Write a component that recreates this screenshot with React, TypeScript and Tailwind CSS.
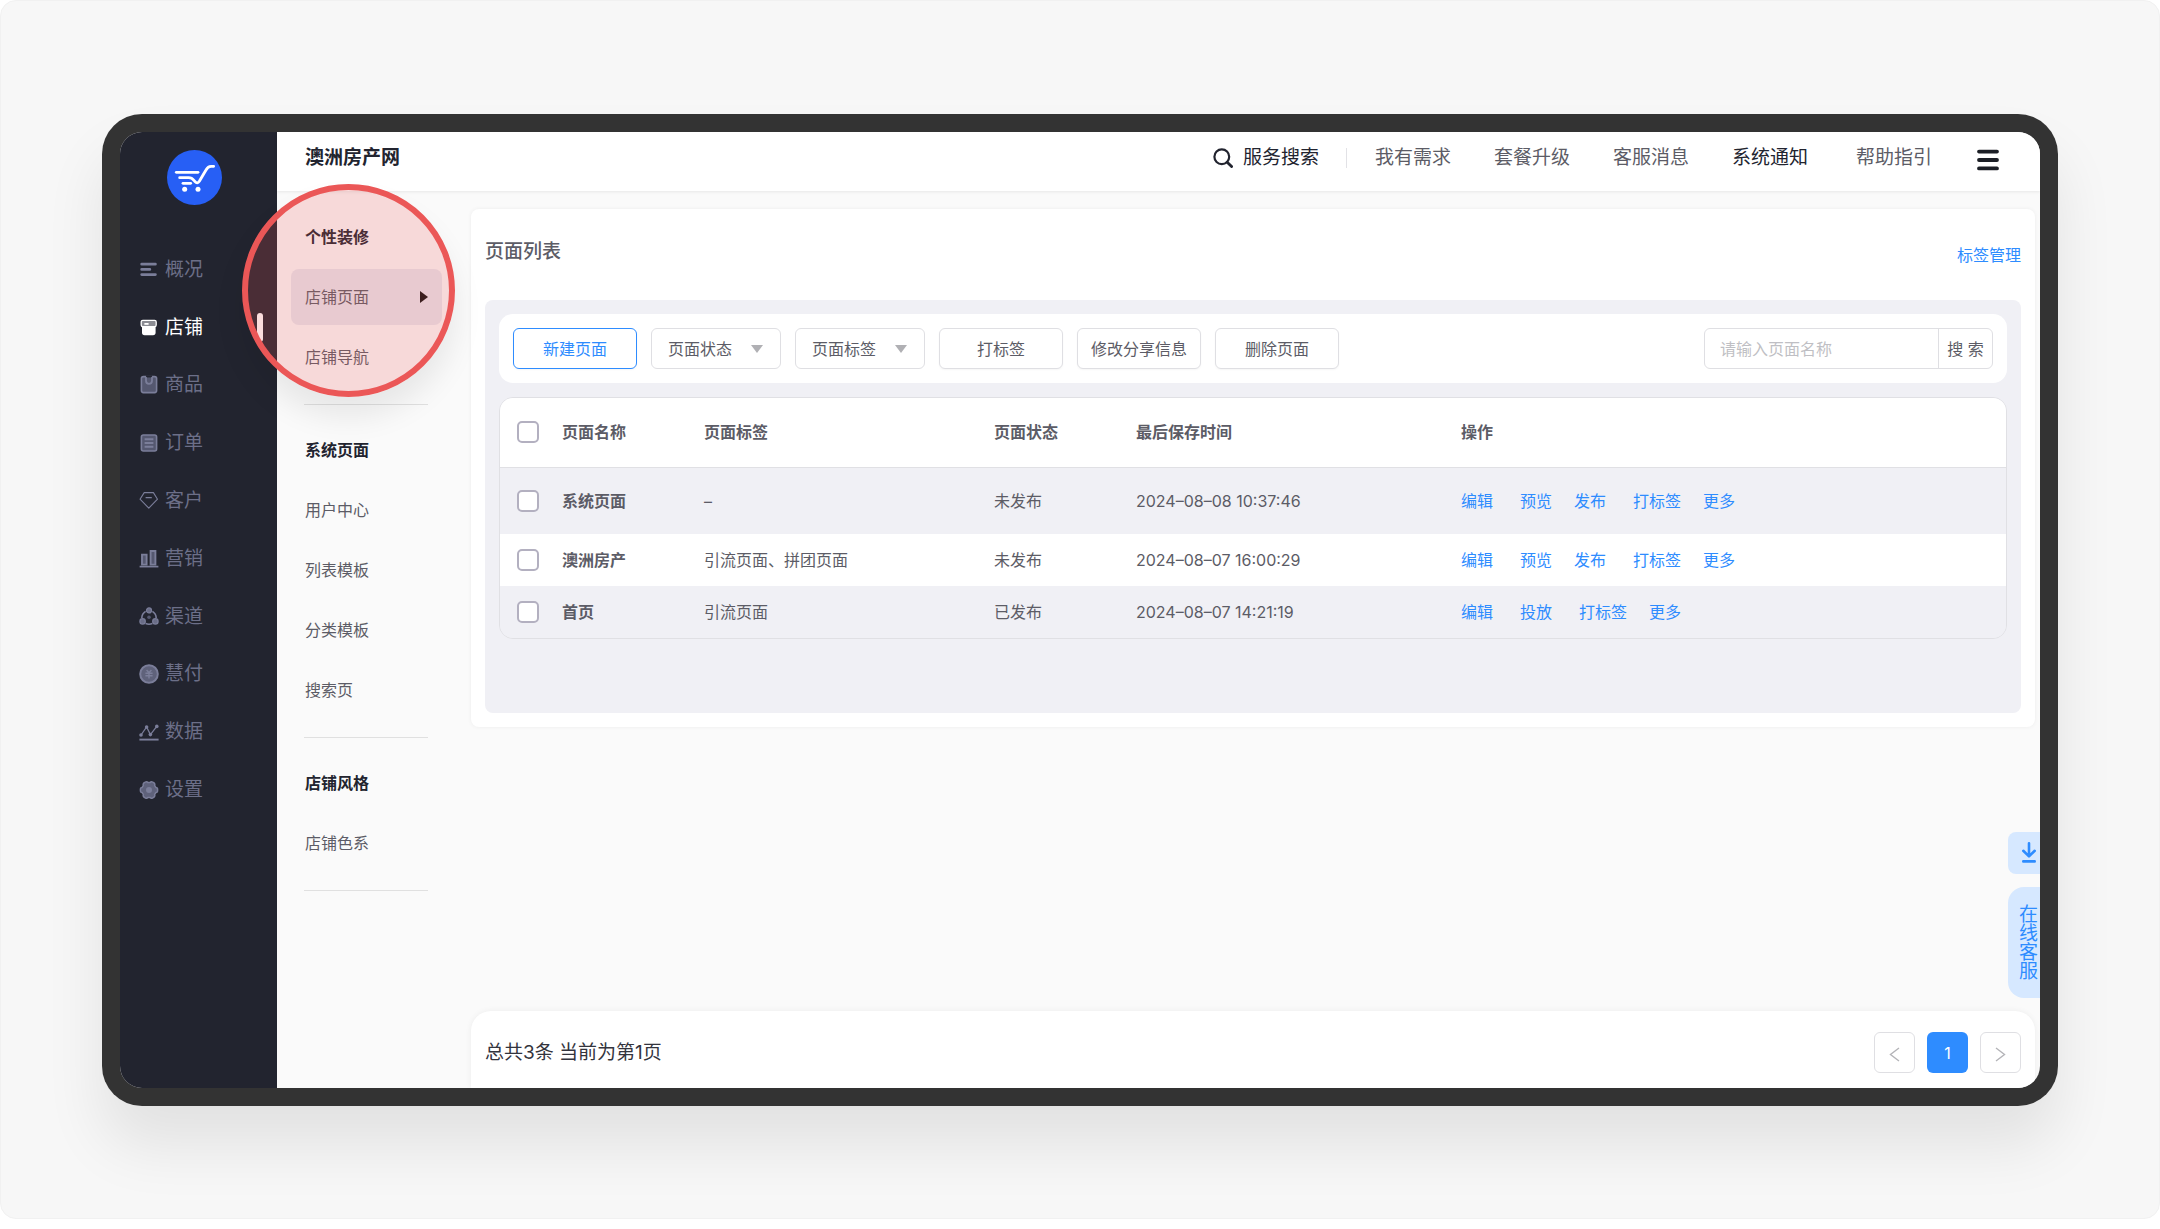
import { useState } from "react";
import type { ReactNode } from "react";

type MenuItem = { name: string; icon: ReactNode };

const menu: MenuItem[] = [
  {
    name: "概况",
    icon: (
      <path
        d="M2.7 4.2H16.4M2.7 9.4H10.8M2.7 14.6H16.4"
        fill="none"
        stroke="currentColor"
        strokeWidth="2.8"
        strokeLinecap="round"
      />
    ),
  },
  {
    name: "店铺",
    icon: (
      <>
        <path d="M3 8H16.6V14.6Q16.6 17.3 14 17.3H5.6Q3 17.3 3 14.6Z" fill="currentColor" />
        <rect x="2.2" y="2.3" width="15" height="6.4" rx="1.6" fill="#8b8c93" stroke="currentColor" strokeWidth="1.3" />
        <path d="M5.4 5.9H9.6" stroke="currentColor" strokeWidth="1.8" />
      </>
    ),
  },
  {
    name: "商品",
    icon: (
      <>
        <rect x="2.4" y="1.6" width="15.2" height="16" rx="2" fill="#555870" stroke="currentColor" strokeWidth="1.6" />
        <path d="M7 0.4H13V2.6H7Z" fill="#22242f" />
        <path d="M7 2.6V5.8A3 3 0 0 0 13 5.8V2.6" fill="none" stroke="currentColor" strokeWidth="1.8" strokeLinecap="round" />
      </>
    ),
  },
  {
    name: "订单",
    icon: (
      <>
        <rect x="2.4" y="2" width="15.2" height="16" rx="2" fill="#555870" stroke="currentColor" strokeWidth="1.6" />
        <path d="M5.6 6.2H14.4M5.6 10H14.4M5.6 13.8H14.4" stroke="currentColor" strokeWidth="1.9" />
      </>
    ),
  },
  {
    name: "客户",
    icon: (
      <path
        d="M5.2 1.6H14.4L18.5 8.2L9.8 17.2L1 8.2ZM6.6 6.6H12.8"
        fill="none"
        stroke="currentColor"
        strokeWidth="1.1"
        strokeLinejoin="round"
      />
    ),
  },
  {
    name: "营销",
    icon: (
      <>
        <path d="M3 5.6H7.6V15.6H3ZM11.6 2H16.4V15.6H11.6Z" fill="#555870" stroke="currentColor" strokeWidth="1.9" />
        <path d="M0.6 17.6H19.4" stroke="currentColor" strokeWidth="1.7" />
      </>
    ),
  },
  {
    name: "渠道",
    icon: (
      <>
        <path d="M6.6 4.4A8 8 0 0 0 2.8 11M13.4 4.4A8 8 0 0 1 17.2 11M6.6 16.6Q10 17.8 13.4 16.6" fill="none" stroke="currentColor" strokeWidth="1.6" />
        <circle cx="10" cy="3.4" r="2.5" fill="#6a6d87" stroke="currentColor" strokeWidth="1.2" />
        <circle cx="3.6" cy="14.4" r="2.7" fill="#6a6d87" stroke="currentColor" strokeWidth="1.2" />
        <circle cx="16.4" cy="14.4" r="2.7" fill="#6a6d87" stroke="currentColor" strokeWidth="1.2" />
        <circle cx="10" cy="10.2" r="1.8" fill="#555870" />
      </>
    ),
  },
  {
    name: "慧付",
    icon: (
      <>
        <circle cx="10" cy="10" r="8.8" fill="#5f627b" stroke="currentColor" strokeWidth="2" />
        <path d="M7.6 6L10 8.6L12.4 6M6.4 9.2H13.6M6.4 11.8H13.6M10 8.6V14.4" fill="none" stroke="currentColor" strokeWidth="1.4" />
      </>
    ),
  },
  {
    name: "数据",
    icon: (
      <>
        <path d="M2 13L7.6 5L11.4 12.6L17.6 4.6" fill="none" stroke="currentColor" strokeWidth="1.3" />
        <path d="M0.4 17.6H19.6" stroke="currentColor" strokeWidth="1.9" />
        <circle cx="2" cy="13" r="1.8" fill="currentColor" />
        <circle cx="7.6" cy="5" r="1.8" fill="currentColor" />
        <circle cx="11.4" cy="12.6" r="1.8" fill="currentColor" />
        <circle cx="17.8" cy="4.4" r="1.8" fill="currentColor" />
      </>
    ),
  },
  {
    name: "设置",
    icon: (
      <>
        <path
          d="M6.2 2.2Q8 1 8.6 2.4H11.4Q12 1 13.8 2.2L15.2 3Q16.4 4 15.6 5.4L17 7.6Q18.8 7.6 18.6 10Q18.8 12.4 17 12.4L15.6 14.6Q16.4 16 15.2 17L13.8 17.8Q12 19 11.4 17.6H8.6Q8 19 6.2 17.8L4.8 17Q3.6 16 4.4 14.6L3 12.4Q1.2 12.4 1.4 10Q1.2 7.6 3 7.6L4.4 5.4Q3.6 4 4.8 3Z"
          fill="#5f627b"
          stroke="currentColor"
          strokeWidth="1.5"
          strokeLinejoin="round"
        />
        <circle cx="10" cy="10" r="3" fill="currentColor" />
      </>
    ),
  },
];

const subMenu = [
  { title: "个性装修", items: ["店铺页面", "店铺导航"] },
  { title: "系统页面", items: ["用户中心", "列表模板", "分类模板", "搜索页"] },
  { title: "店铺风格", items: ["店铺色系"] },
];

const rows = [
  {
    name: "系统页面",
    tags: "–",
    status: "未发布",
    time: "2024–08–08 10:37:46",
    actions: ["编辑", "预览", "发布", "打标签", "更多"],
    className: "h-[67px] bg-[#f0f0f5]",
  },
  {
    name: "澳洲房产",
    tags: "引流页面、拼团页面",
    status: "未发布",
    time: "2024–08–07 16:00:29",
    actions: ["编辑", "预览", "发布", "打标签", "更多"],
    className: "h-[52px] bg-white",
  },
  {
    name: "首页",
    tags: "引流页面",
    status: "已发布",
    time: "2024–08–07 14:21:19",
    actions: ["编辑", "投放", "打标签", "更多"],
    className: "h-[52px] bg-[#f0f0f5]",
  },
];

export default function App() {
  return (
    <div className="flex min-h-screen flex-col bg-white pb-2.5 font-['Inter','Noto_Sans_CJK_SC',sans-serif] text-base leading-6 text-[#5c5c66]">
      <div className="flex flex-1 flex-col rounded-2xl border border-[#f1f1f1] bg-[#f7f7f7] px-[101px] pt-[113px] pb-[112px]">
        <div className="flex flex-1 flex-col rounded-[40px] bg-[#333] p-[18px] shadow-[0_40px_60px_rgba(0,0,0,0.085)]">
          <div className="relative flex flex-1 overflow-hidden rounded-[22px] bg-[#fafafa]">
            <Sidebar />
            <div className="flex min-w-0 flex-1 flex-col">
              <Header />
              <div className="flex flex-1">
                <SubNav />
                <main className="flex min-w-0 flex-1 flex-col justify-between gap-6 pt-[18px] pr-[5px]">
                  <PageList />
                  <Footer />
                </main>
              </div>
            </div>
            <SideWidgets />
            <div className="pointer-events-none absolute top-[52px] left-[122px] z-20 h-[213px] w-[213px] rounded-full border-6 border-[#eb5757] bg-[#eb5757]/20 shadow-[0_20px_30px_rgba(0,0,0,0.08)]" />
          </div>
        </div>
      </div>
    </div>
  );
}

function Sidebar() {
  return (
    <aside className="w-[157px] shrink-0 bg-[#22242f] pt-[18px]">
      <svg viewBox="0 0 165 165" className="ml-[47px] h-[55px] w-[55px]" aria-label="logo">
        <circle cx="82.5" cy="82.5" r="82.5" fill="#275ff5" />
        <g fill="none" stroke="#fff" strokeWidth="8.5" strokeLinecap="round" strokeLinejoin="round">
          <path d="M28 67H93" />
          <path d="M38 83H65C76 83 78 88 84 95Q91 103 97 94L117 60Q123 49 132 49H140" />
          <path d="M48 100H71" />
        </g>
        <circle cx="53" cy="118" r="7.5" fill="#fff" />
        <circle cx="93" cy="118" r="7.5" fill="#fff" />
      </svg>
      <nav className="mt-9 flex h-[578px] flex-col justify-between">
        {menu.map((item) => {
          const active = item.name === "店铺";
          return (
            <a
              key={item.name}
              href="#"
              className={`flex h-[58px] items-center gap-1.5 pr-3.5 pl-[19px] text-[19px] ${active ? "text-white" : "text-[#6c6f88]"}`}
            >
              <svg viewBox="0 0 20 20" className={`h-5 w-5 ${active ? "text-white" : "text-[#7b7e9a]"}`}>
                {item.icon}
              </svg>
              {item.name}
              {active && <span className="ml-auto h-[29px] w-1.5 rounded-full bg-white" />}
            </a>
          );
        })}
      </nav>
    </aside>
  );
}

function Header() {
  return (
    <header className="z-10 flex h-[59px] shrink-0 items-center bg-white pr-[41px] pb-[7px] pl-7 text-[19px] shadow-[0_1px_3px_rgba(0,0,0,0.08)]">
      <h1 className="font-semibold text-[#22242f]">澳洲房产网</h1>
      <div className="ml-auto flex items-center">
        <a href="#" className="flex items-center gap-2.5 text-[#22242f]">
          <svg viewBox="0 0 20 20" className="h-5 w-5" fill="none" stroke="currentColor" strokeWidth="2.2" strokeLinecap="round">
            <circle cx="8.8" cy="8.8" r="7.4" />
            <path d="M14.2 14.2L18.6 18.6" strokeWidth="2.8" />
          </svg>
          服务搜索
        </a>
        <span className="mr-7 ml-[27px] h-5 w-px bg-[#e2e2e6]" />
        <nav className="flex items-center gap-[43px]">
          <a href="#">我有需求</a>
          <a href="#">套餐升级</a>
          <a href="#">客服消息</a>
          <a href="#" className="text-[#22242f]">系统通知</a>
        </nav>
        <a href="#" className="ml-12">帮助指引</a>
        <button type="button" aria-label="菜单" className="ml-[45px] pt-1 text-[#1c1f26]">
          <svg viewBox="0 0 22 22" className="h-[22px] w-[22px]" stroke="currentColor" strokeWidth="3.8" strokeLinecap="round">
            <path d="M2 2.6H20M2 11H20M2 19.4H20" />
          </svg>
        </button>
      </div>
    </header>
  );
}

function SubNav() {
  return (
    <nav className="w-[194px] shrink-0 pt-[18px] pl-3.5">
      {subMenu.map((group) => (
        <section key={group.title} className="mb-[17px] w-[151px]">
          <h2 className="flex h-14 items-center pl-3.5 font-semibold text-[#22242f]">{group.title}</h2>
          {group.items.map((item) => {
            const active = item === "店铺页面";
            return (
              <a
                key={item}
                href="#"
                className={`mt-1 flex h-14 items-center justify-between rounded-lg px-3.5 ${active ? "bg-[#e8e8ef]" : ""}`}
              >
                {item}
                {active && (
                  <svg viewBox="0 0 8 12" className="h-3 w-2">
                    <path d="M0 0L8 6L0 12Z" fill="#111" />
                  </svg>
                )}
              </a>
            );
          })}
          <hr className="mt-[19px] mr-3.5 ml-[13px] border-[#e0e0e0]" />
        </section>
      ))}
    </nav>
  );
}

function PageList() {
  return (
    <section className="rounded-lg bg-white px-3.5 pb-3.5 shadow-[0_0_4px_rgba(0,0,0,0.06)]">
      <div className="flex h-[91px] items-center justify-between pb-1.5">
        <h2 className="text-[19px] font-medium">页面列表</h2>
        <a href="#" className="pt-1.5 text-[#2e8cff]">标签管理</a>
      </div>
      <div className="min-h-[413px] rounded-lg bg-[#f0f0f5] p-3.5">
        <Toolbar />
        <PageTable />
      </div>
    </section>
  );
}

function Toolbar() {
  const [keyword, setKeyword] = useState("");

  return (
    <div className="flex items-center gap-3.5 rounded-[14px] bg-white p-3.5">
      <ToolButton primary>新建页面</ToolButton>
      <FilterSelect label="页面状态" options={["未发布", "已发布"]} />
      <FilterSelect label="页面标签" options={["引流页面", "拼团页面"]} />
      <ToolButton>打标签</ToolButton>
      <ToolButton>修改分享信息</ToolButton>
      <ToolButton>删除页面</ToolButton>
      <form
        className="ml-auto flex h-[41px] overflow-hidden rounded-md border border-[#dfdfe3]"
        onSubmit={(event) => event.preventDefault()}
      >
        <input
          aria-label="页面名称"
          value={keyword}
          onChange={(event) => setKeyword(event.target.value)}
          placeholder="请输入页面名称"
          className="w-[234px] border-r border-[#dfdfe3] px-[15px] outline-none placeholder:text-[#bfbfc4]"
        />
        <button type="submit" className="w-[53px] whitespace-nowrap">搜 索</button>
      </form>
    </div>
  );
}

function ToolButton({ primary, children }: { primary?: boolean; children: ReactNode }) {
  return (
    <button
      type="button"
      className={`h-[41px] w-[124px] rounded-md border bg-white whitespace-nowrap shadow-[0_1px_2px_rgba(0,0,0,0.04)] ${
        primary ? "border-[#2e8cff] text-[#2e8cff]" : "border-[#dfdfe3]"
      }`}
    >
      {children}
    </button>
  );
}

function FilterSelect({ label, options }: { label: string; options: string[] }) {
  return (
    <div className="relative">
      <select
        aria-label={label}
        className="h-[41px] w-[130px] appearance-none rounded-md border border-[#dfdfe3] bg-white pl-4"
      >
        <option>{label}</option>
        {options.map((option) => (
          <option key={option}>{option}</option>
        ))}
      </select>
      <svg viewBox="0 0 12 8" className="pointer-events-none absolute top-[17px] right-[18px] h-2 w-3">
        <path d="M0 0H12L6 8Z" fill="#b0b0b4" />
      </svg>
    </div>
  );
}

function PageTable() {
  const [checked, setChecked] = useState<string[]>([]);

  function toggle(name: string) {
    setChecked((current) => (current.includes(name) ? current.filter((item) => item !== name) : [...current, name]));
  }

  function toggleAll() {
    setChecked((current) => (current.length === rows.length ? [] : rows.map((row) => row.name)));
  }

  return (
    <div className="mt-3.5 overflow-hidden rounded-[14px] border border-[#e0e0e4]">
      <table className="w-full table-fixed text-left">
        <colgroup>
          <col className="w-[62px]" />
          <col className="w-[142px]" />
          <col className="w-[290px]" />
          <col className="w-[142px]" />
          <col className="w-[325px]" />
          <col />
        </colgroup>
        <thead>
          <tr className="h-[69px] border-b border-[#e0e0e4] bg-white">
            <th className="pl-[17px]">
              <Checkbox label="全选" checked={checked.length === rows.length} onChange={toggleAll} />
            </th>
            <th className="font-semibold">页面名称</th>
            <th className="font-semibold">页面标签</th>
            <th className="font-semibold">页面状态</th>
            <th className="font-semibold">最后保存时间</th>
            <th className="font-semibold">操作</th>
          </tr>
        </thead>
        <tbody>
          {rows.map((row) => (
            <tr key={row.name} className={row.className}>
              <td className="pl-[17px]">
                <Checkbox label={row.name} checked={checked.includes(row.name)} onChange={() => toggle(row.name)} />
              </td>
              <td className="font-semibold">{row.name}</td>
              <td>{row.tags}</td>
              <td>{row.status}</td>
              <td>{row.time}</td>
              <td>
                <div className="flex gap-[22px] text-[#2e8cff]">
                  {row.actions.map((action) => (
                    <a
                      key={action}
                      href="#"
                      className={["预览", "投放", "打标签"].includes(action) ? "ml-[5px]" : ""}
                    >
                      {action}
                    </a>
                  ))}
                </div>
              </td>
            </tr>
          ))}
        </tbody>
      </table>
    </div>
  );
}

function Checkbox({ label, checked, onChange }: { label: string; checked: boolean; onChange: () => void }) {
  return (
    <input
      type="checkbox"
      aria-label={label}
      checked={checked}
      onChange={onChange}
      className="block h-[22px] w-[22px] appearance-none rounded-[5px] border-2 border-[#b3b0c0] bg-white checked:bg-[#2e8cff]"
    />
  );
}

function Footer() {
  return (
    <footer className="flex h-[77px] items-center justify-between rounded-t-[20px] bg-white px-3.5 pt-1.5 shadow-[0_0_6px_rgba(0,0,0,0.06)]">
      <p className="text-[19px] text-[#33343d]">总共3条 当前为第1页</p>
      <div className="flex gap-3">
        <button type="button" aria-label="上一页" className="flex h-[41px] w-[41px] items-center justify-center rounded-md border border-[#dfdfe3] text-[#b4b4b8]">
          <Chevron d="M10 1L1.5 7.5L10 14" />
        </button>
        <button type="button" className="h-[41px] w-[41px] rounded-md bg-[#2e8cff] text-white">
          1
        </button>
        <button type="button" aria-label="下一页" className="flex h-[41px] w-[41px] items-center justify-center rounded-md border border-[#dfdfe3] text-[#b4b4b8]">
          <Chevron d="M1 1L9.5 7.5L1 14" />
        </button>
      </div>
    </footer>
  );
}

function Chevron({ d }: { d: string }) {
  return (
    <svg viewBox="0 0 11 15" className="mt-1 h-[15px] w-[11px]" fill="none" stroke="currentColor" strokeWidth="1.4">
      <path d={d} />
    </svg>
  );
}

function SideWidgets() {
  return (
    <div className="absolute right-0 bottom-[90px] flex w-8 flex-col gap-[13px] text-[#2e8cff]">
      <button type="button" aria-label="下载" className="flex h-[42px] justify-end rounded-l-lg bg-[#d6e8ff] pt-2.5 pr-1">
        <svg viewBox="0 0 14 21" className="h-[21px] w-3.5" fill="none" stroke="currentColor" strokeWidth="2.6" strokeLinecap="round" strokeLinejoin="round">
          <path d="M7 1.3V14M1.3 8.8L7 14.4L12.7 8.8M1.3 19.4H12.7" />
        </svg>
      </button>
      <button type="button" className="flex h-[111px] items-center rounded-l-2xl bg-[#d6e8ff] pl-[11px] text-[19px] leading-[19px]">
        <span className="w-[19px] break-all">在线客服</span>
      </button>
    </div>
  );
}
